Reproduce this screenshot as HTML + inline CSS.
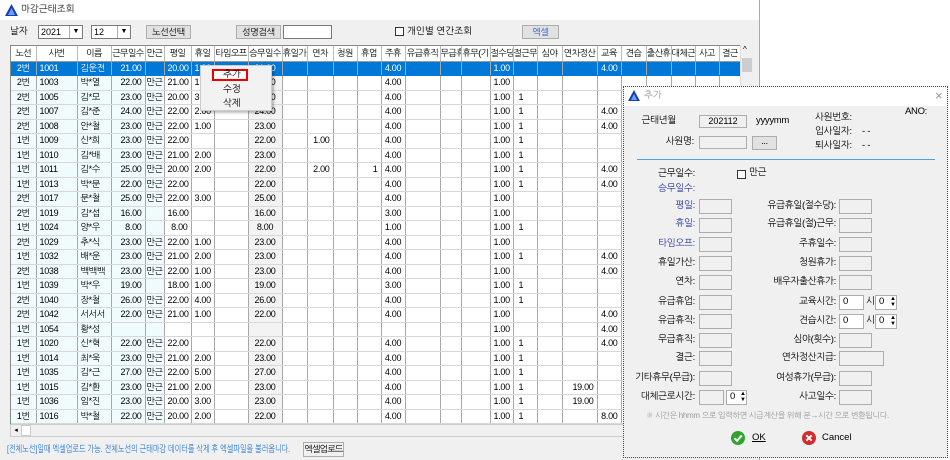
<!DOCTYPE html>
<html><head><meta charset="utf-8"><style>
*{box-sizing:border-box;margin:0;padding:0}
body{width:950px;height:460px;background:#fff;position:relative;overflow:hidden;font-family:"Liberation Sans","NanumGothic","Noto Sans CJK KR",sans-serif;font-size:11px;color:#000}
.a{position:absolute;white-space:nowrap}
#win{position:absolute;left:0;top:0;width:760px;height:460px;background:#f0f0f0;border-right:1px solid #aaa}
#tbar{position:absolute;left:0;top:0;width:759px;height:20px;background:#fff}
.btn{position:absolute;background:#e1e1e1;border:1px solid #adadad;text-align:center;font-size:9px;line-height:12px;white-space:nowrap;letter-spacing:-0.3px}
.inp{position:absolute;background:#fff;border:1px solid #7a7a7a}
.cmb{position:absolute;background:#fff;border:1px solid #7a7a7a;font-size:9px;line-height:12px;padding-left:2px}
.cmb i{position:absolute;right:0;top:0;width:13px;height:12px;border-left:1px solid #aaa;background:#fff;font-style:normal;font-size:7px;text-align:center;line-height:12px}
#grid{position:absolute;left:10px;top:45px;width:730px;height:379px;overflow:hidden;background:#fff;border-left:1px solid #888;border-top:1px solid #888}
table{border-collapse:collapse;table-layout:fixed;width:730px;font-size:9px}
th{height:15px;background:#fff;font-weight:normal;border-right:1px solid #bbb;border-bottom:1px solid #999;font-size:9px;letter-spacing:-0.6px;overflow:hidden;white-space:nowrap;padding:0}
td{height:14.5px;border-right:1px solid #a8a8a8;border-bottom:1px solid #d8d8d8;text-align:right;padding:0 3px;overflow:hidden;white-space:nowrap;line-height:13px;letter-spacing:-0.3px}
td:nth-child(1),td:nth-child(5){text-align:center;padding:0}
td:nth-child(2),td:nth-child(3){text-align:left}
td:nth-child(19){text-align:left;padding-left:5px}
td:nth-child(-n+5){background:#effbfc}
td:nth-child(8){background:#fff}
td:nth-child(9){background:#f3f3f3;text-align:center}
td:nth-child(14),td:nth-child(18){text-align:center}
tr.sel td{background:#0078d7;color:#fff;border-bottom-color:#0078d7}
#pop{position:absolute;left:623px;top:86px;width:325px;height:372px;background:#f0f0f0;border:1px dotted #e00}
.pl{position:absolute;white-space:nowrap;font-size:9.5px;text-align:right;line-height:12px;letter-spacing:-0.3px}
.pi{position:absolute;width:33px;height:15px;border:1px solid #adadad;background:#f0f0f0}
.blue{color:#2a3a9a}
</style></head><body>
<div id="win">
<div id="tbar"><svg class="a" style="left:5px;top:4px" width="13" height="12"><polygon points="6.5,0 13,12 0,12" fill="#1a3db0"/><polygon points="6.5,4 10,11 3,11" fill="#6aa0ff"/></svg><span class="a" style="left:21px;top:4px;font-size:9.5px;color:#222">마감근태조회</span></div>
<span class="a" style="left:10px;top:26px;font-size:9.5px">날자</span>
<div class="cmb" style="left:38px;top:25px;width:45px;height:14px">2021<i>▼</i></div>
<div class="cmb" style="left:91px;top:25px;width:40px;height:14px">12<i>▼</i></div>
<div class="btn" style="left:146px;top:25px;width:45px;height:14px">노선선택</div>
<div class="btn" style="left:236px;top:25px;width:45px;height:14px">성명검색</div>
<div class="inp" style="left:283px;top:25px;width:49px;height:14px"></div>
<div class="inp" style="left:395px;top:27px;width:9px;height:9px;border-color:#333"></div>
<span class="a" style="left:407px;top:26px;font-size:9.5px">개인별 연간조회</span>
<div class="btn" style="left:522px;top:25px;width:37px;height:14px;color:#2a5ad0">엑셀</div>
<div id="grid"><table>
<colgroup><col width="25"><col width="41"><col width="34"><col width="34"><col width="19"><col width="27"><col width="23"><col width="34"><col width="34"><col width="25"><col width="26"><col width="24"><col width="24"><col width="24"><col width="35"><col width="21"><col width="29"><col width="23"><col width="24"><col width="25"><col width="35"><col width="24"><col width="25"><col width="25"><col width="24"><col width="24"><col width="22"></colgroup>
<tr><th>노선<th>사번<th>이름<th>근무일수<th>만근<th>평일<th>휴일<th>타임오프<th>승무일수<th>휴일가<th>연차<th>청원<th>휴업<th>주휴<th>유급휴직<th>무급휴<th>휴무(기<th>절수당<th>절근무<th>심야<th>연차정산<th>교육<th>견습<th>출산휴<th>대체근<th>사고<th>결근</tr>
<tr class="sel"><td>2번<td>1001<td>김운전<td>21.00<td><td>20.00<td>1.00<td><td>21.00<td><td><td><td><td>4.00<td><td><td><td>1.00<td><td><td><td>4.00<td><td><td><td><td></tr>
<tr><td>2번<td>1003<td>박*열<td>22.00<td>만근<td>21.00<td>1.00<td><td>22.00<td><td><td><td><td>4.00<td><td><td><td>1.00<td><td><td><td><td><td><td><td><td></tr>
<tr><td>2번<td>1005<td>김*모<td>23.00<td>만근<td>20.00<td>3.00<td><td>23.00<td><td><td><td><td>4.00<td><td><td><td>1.00<td>1<td><td><td><td><td><td><td><td></tr>
<tr><td>2번<td>1007<td>김*준<td>24.00<td>만근<td>22.00<td>2.00<td><td>24.00<td><td><td><td><td>4.00<td><td><td><td>1.00<td>1<td><td><td>4.00<td><td><td><td><td></tr>
<tr><td>2번<td>1008<td>안*철<td>23.00<td>만근<td>22.00<td>1.00<td><td>23.00<td><td><td><td><td>4.00<td><td><td><td>1.00<td>1<td><td><td>4.00<td><td><td><td><td></tr>
<tr><td>1번<td>1009<td>신*희<td>23.00<td>만근<td>22.00<td><td><td>22.00<td><td>1.00<td><td><td>4.00<td><td><td><td>1.00<td>1<td><td><td><td><td><td><td><td></tr>
<tr><td>1번<td>1010<td>김*배<td>23.00<td>만근<td>21.00<td>2.00<td><td>23.00<td><td><td><td><td>4.00<td><td><td><td>1.00<td>1<td><td><td><td><td><td><td><td></tr>
<tr><td>1번<td>1011<td>김*수<td>25.00<td>만근<td>20.00<td>2.00<td><td>22.00<td><td>2.00<td><td>1<td>4.00<td><td><td><td>1.00<td>1<td><td><td>4.00<td><td><td><td><td></tr>
<tr><td>1번<td>1013<td>박*문<td>22.00<td>만근<td>22.00<td><td><td>22.00<td><td><td><td><td>4.00<td><td><td><td>1.00<td>1<td><td><td>4.00<td><td><td><td><td></tr>
<tr><td>2번<td>1017<td>문*철<td>25.00<td>만근<td>22.00<td>3.00<td><td>25.00<td><td><td><td><td>4.00<td><td><td><td>1.00<td><td><td><td><td><td><td><td><td></tr>
<tr><td>2번<td>1019<td>김*섭<td>16.00<td><td>16.00<td><td><td>16.00<td><td><td><td><td>3.00<td><td><td><td>1.00<td><td><td><td><td><td><td><td><td></tr>
<tr><td>1번<td>1024<td>양*우<td>8.00<td><td>8.00<td><td><td>8.00<td><td><td><td><td>1.00<td><td><td><td>1.00<td>1<td><td><td><td><td><td><td><td></tr>
<tr><td>2번<td>1029<td>추*식<td>23.00<td>만근<td>22.00<td>1.00<td><td>23.00<td><td><td><td><td>4.00<td><td><td><td>1.00<td><td><td><td><td><td><td><td><td></tr>
<tr><td>1번<td>1032<td>배*운<td>23.00<td>만근<td>21.00<td>2.00<td><td>23.00<td><td><td><td><td>4.00<td><td><td><td>1.00<td>1<td><td><td>4.00<td><td><td><td><td></tr>
<tr><td>2번<td>1038<td>백백백<td>23.00<td>만근<td>22.00<td>1.00<td><td>23.00<td><td><td><td><td>4.00<td><td><td><td>1.00<td><td><td><td>4.00<td><td><td><td><td></tr>
<tr><td>1번<td>1039<td>박*우<td>19.00<td><td>18.00<td>1.00<td><td>19.00<td><td><td><td><td>3.00<td><td><td><td>1.00<td>1<td><td><td><td><td><td><td><td></tr>
<tr><td>2번<td>1040<td>장*철<td>26.00<td>만근<td>22.00<td>4.00<td><td>26.00<td><td><td><td><td>4.00<td><td><td><td>1.00<td>1<td><td><td><td><td><td><td><td></tr>
<tr><td>2번<td>1042<td>서서서<td>22.00<td>만근<td>21.00<td>1.00<td><td>22.00<td><td><td><td><td>4.00<td><td><td><td>1.00<td><td><td><td>4.00<td><td><td><td><td></tr>
<tr><td>1번<td>1054<td>황*성<td><td><td><td><td><td><td><td><td><td><td><td><td><td><td>1.00<td><td><td><td>4.00<td><td><td><td><td></tr>
<tr><td>1번<td>1020<td>신*혁<td>22.00<td>만근<td>22.00<td><td><td>22.00<td><td><td><td><td>4.00<td><td><td><td>1.00<td>1<td><td><td>4.00<td><td><td><td><td></tr>
<tr><td>1번<td>1014<td>최*욱<td>23.00<td>만근<td>21.00<td>2.00<td><td>23.00<td><td><td><td><td>4.00<td><td><td><td>1.00<td>1<td><td><td><td><td><td><td><td></tr>
<tr><td>1번<td>1035<td>김*근<td>27.00<td>만근<td>22.00<td>5.00<td><td>27.00<td><td><td><td><td>4.00<td><td><td><td>1.00<td>1<td><td><td><td><td><td><td><td></tr>
<tr><td>1번<td>1015<td>김*환<td>23.00<td>만근<td>21.00<td>2.00<td><td>23.00<td><td><td><td><td>4.00<td><td><td><td>1.00<td>1<td><td>19.00<td><td><td><td><td><td></tr>
<tr><td>1번<td>1036<td>임*진<td>23.00<td>만근<td>20.00<td>3.00<td><td>23.00<td><td><td><td><td>4.00<td><td><td><td>1.00<td>1<td><td>19.00<td><td><td><td><td><td></tr>
<tr><td>1번<td>1016<td>박*철<td>22.00<td>만근<td>20.00<td>2.00<td><td>22.00<td><td><td><td><td>4.00<td><td><td><td>1.00<td>1<td><td><td>8.00<td><td><td><td><td></tr>
<tr><td>1번<td>1018<td>박*철<td>22.00<td>만근<td>21.00<td>1.00<td><td>22.00<td><td><td><td><td>4.00<td><td><td><td>1.00<td>1<td><td><td><td><td><td><td><td></tr>
</table></div>
<div class="a" style="left:740px;top:45px;width:12px;height:380px;background:#f0f0f0;border-left:1px solid #ddd"><span class="a" style="left:2px;top:0;font-size:8px">^</span><div class="a" style="left:1px;top:13px;width:10px;height:14px;background:#cdcdcd"></div></div>
<div class="a" style="left:10px;top:424px;width:742px;height:13px;background:#f0f0f0;border:1px solid #ccc"><div class="a" style="left:0;top:0;width:10px;height:11px;font-size:7px;line-height:11px;text-align:center">◂</div><div class="a" style="left:10px;top:0;width:10px;height:11px;background:#fff;border:1px solid #ccc"></div></div>
<span class="a" style="left:7px;top:444px;font-size:9.5px;color:#2a7ad8;transform:scaleX(0.74);transform-origin:left top">[전체노선]일때 엑셀업로드 가능. 전체노선의 근태마감 데이터를 삭제 후 엑셀파일을 불러옵니다.</span>
<div class="btn" style="left:303px;top:442px;width:41px;height:15px;background:#f0f0f0;line-height:13px;letter-spacing:-0.8px">엑셀업로드</div>
<div class="a" style="left:200px;top:65px;width:72px;height:46px;background:#f2f2f2;border:1px solid #ccc;box-shadow:2px 2px 2px rgba(0,0,0,.25)">
<div class="a" style="left:11px;top:3px;width:36px;height:12px;border:2px solid #e00;background:#fff"></div>
<span class="a" style="left:22px;top:3px;font-size:9.5px">추가</span>
<span class="a" style="left:22px;top:18px;font-size:9.5px">수정</span>
<span class="a" style="left:22px;top:32px;font-size:9.5px">삭제</span></div>
</div>
<div id="pop">
<div class="a" style="left:0;top:0;width:323px;height:19px;background:#fff"></div>
<svg class="a" style="left:4px;top:3px" width="12" height="11"><polygon points="6,0 12,11 0,11" fill="#1a3db0"/><polygon points="6,4 9,10 3,10" fill="#6aa0ff"/></svg>
<span class="a" style="left:20px;top:3px;font-size:9.5px;color:#999">추가</span>
<span class="a" style="left:311px;top:1px;font-size:13px;color:#999">×</span>
</div>
<div class="pl" style="left:905px;top:106px">ANO:</div>
<div class="pl" style="left:630px;top:115px;width:46px">근태년월</div>
<div class="pi" style="left:699px;top:115px;width:48px;height:13px;font-size:9px;text-align:center;line-height:11px">202112</div>
<div class="pl" style="left:756px;top:115px">yyyymm</div>
<div class="pl" style="left:815px;top:112px">사원번호:</div>
<div class="pl" style="left:815px;top:126px">입사일자:</div><div class="pl" style="left:862px;top:126px">- -</div>
<div class="pl" style="left:630px;top:136px;width:64px">사원명:</div>
<div class="pi" style="left:699px;top:136px;width:48px;height:13px"></div>
<div class="btn" style="left:752px;top:136px;width:25px;height:14px;line-height:9px">...</div>
<div class="pl" style="left:815px;top:140px">퇴사일자:</div><div class="pl" style="left:862px;top:140px">- -</div>
<div class="a" style="left:637px;top:159px;width:298px;height:1px;background:#4ea2e8"></div>
<div class="pl" style="left:620px;top:168px;width:75px">근무일수:</div>
<div class="inp" style="left:737px;top:170px;width:9px;height:9px;border-color:#333"></div><div class="pl" style="left:749px;top:167px">만근</div>
<div class="pl blue" style="left:620px;top:183px;width:75px">승무일수:</div>
<div class="pl blue" style="left:620px;top:200px;width:75px">평일:</div><div class="pi" style="left:699px;top:199px"></div>
<div class="pl blue" style="left:620px;top:218px;width:75px">휴일:</div><div class="pi" style="left:699px;top:218px"></div>
<div class="pl blue" style="left:620px;top:238px;width:75px">타임오프:</div><div class="pi" style="left:699px;top:237px"></div>
<div class="pl" style="left:620px;top:257px;width:75px">휴일가산:</div><div class="pi" style="left:699px;top:256px"></div>
<div class="pl" style="left:620px;top:276px;width:75px">연차:</div><div class="pi" style="left:699px;top:275px"></div>
<div class="pl" style="left:620px;top:296px;width:75px">유급휴업:</div><div class="pi" style="left:699px;top:295px"></div>
<div class="pl" style="left:620px;top:315px;width:75px">유급휴직:</div><div class="pi" style="left:699px;top:314px"></div>
<div class="pl" style="left:620px;top:334px;width:75px">무급휴직:</div><div class="pi" style="left:699px;top:333px"></div>
<div class="pl" style="left:620px;top:352px;width:75px">결근:</div><div class="pi" style="left:699px;top:351px"></div>
<div class="pl" style="left:620px;top:372px;width:75px">기타휴무(무급):</div><div class="pi" style="left:699px;top:371px"></div>
<div class="pl" style="left:620px;top:391px;width:75px">대체근로시간:</div><div class="pi" style="left:699px;top:390px;width:25px"></div>
<div class="pi" style="left:726px;top:390px;width:21px;background:#fff;font-size:9.5px;padding-left:3px">0<span class="a" style="right:0;top:0;font-size:6px;line-height:6px">▲<br>▼</span></div>
<div class="pl" style="left:740px;top:200px;width:96px">유급휴일(절수당):</div><div class="pi" style="left:839px;top:199px"></div>
<div class="pl" style="left:740px;top:218px;width:96px">유급휴일(절)근무:</div><div class="pi" style="left:839px;top:218px"></div>
<div class="pl" style="left:740px;top:238px;width:96px">주휴일수:</div><div class="pi" style="left:839px;top:237px"></div>
<div class="pl" style="left:740px;top:257px;width:96px">청원휴가:</div><div class="pi" style="left:839px;top:256px"></div>
<div class="pl" style="left:740px;top:276px;width:96px">배우자출산휴가:</div><div class="pi" style="left:839px;top:275px"></div>
<div class="pl" style="left:740px;top:296px;width:96px">교육시간:</div><div class="pi" style="left:839px;top:295px;width:25px;background:#fff;font-size:9.5px;padding-left:3px">0</div><div class="pl" style="left:866px;top:296px">시</div>
<div class="pi" style="left:875px;top:295px;width:22px;background:#fff;font-size:9.5px;padding-left:3px">0<span class="a" style="right:0;top:0;font-size:6px;line-height:6px">▲<br>▼</span></div>
<div class="pl" style="left:740px;top:315px;width:96px">견습시간:</div><div class="pi" style="left:839px;top:314px;width:25px;background:#fff;font-size:9.5px;padding-left:3px">0</div><div class="pl" style="left:866px;top:315px">시</div>
<div class="pi" style="left:875px;top:314px;width:22px;background:#fff;font-size:9.5px;padding-left:3px">0<span class="a" style="right:0;top:0;font-size:6px;line-height:6px">▲<br>▼</span></div>
<div class="pl" style="left:740px;top:334px;width:96px">심야(횟수):</div><div class="pi" style="left:839px;top:333px"></div>
<div class="pl" style="left:740px;top:352px;width:96px">연차정산지급:</div><div class="pi" style="left:839px;top:351px;width:45px"></div>
<div class="pl" style="left:740px;top:372px;width:96px">여성휴가(무급):</div><div class="pi" style="left:839px;top:371px"></div>
<div class="pl" style="left:740px;top:391px;width:96px">사고일수:</div><div class="pi" style="left:839px;top:390px"></div>
<div class="pl" style="left:646px;top:410px;font-size:8px;color:#999">※ 시간은 hhmm 으로 입력하면 시급계산을 위해 분→시간 으로 변환됩니다.</div>
<svg class="a" style="left:731px;top:431px" width="14" height="14"><circle cx="7" cy="7" r="7" fill="#2fa52f"/><path d="M3.5 7.2 6 9.8 10.8 4.4" stroke="#fff" stroke-width="2" fill="none"/></svg>
<span class="a" style="left:752px;top:432px;font-size:9.5px;text-decoration:underline">OK</span>
<svg class="a" style="left:802px;top:431px" width="14" height="14"><circle cx="7" cy="7" r="7" fill="#d42a2a"/><path d="M4.3 4.3 9.7 9.7M9.7 4.3 4.3 9.7" stroke="#fff" stroke-width="2"/></svg>
<span class="a" style="left:822px;top:432px;font-size:9.5px">Cancel</span>
</body></html>
